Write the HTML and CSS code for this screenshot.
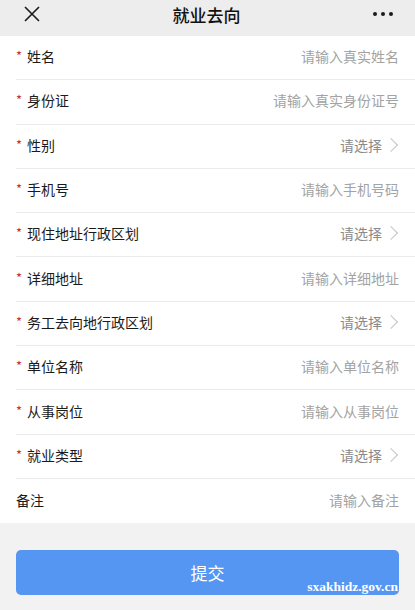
FILE: index.html
```html
<!DOCTYPE html>
<html lang="zh-CN">

<head>
    <meta charset="UTF-8">
    <meta name="viewport" content="width=device-width, initial-scale=1.0">
    <title>就业去向</title>
    <link rel="stylesheet" href="styles.css">
</head>

<body>
    <div class="topbar">
        <svg class="close" width="16" height="16" viewBox="0 0 16 16">
            <path d="M1 1 L15 15 M15 1 L1 15" stroke="#1a1a1a" stroke-width="1.6" fill="none" />
        </svg>
        <h1 class="title">就业去向</h1>
        <div class="more"><i></i><i></i><i></i></div>
    </div>

    <div class="form">
        <div class="row">
            <span class="label"><b>*</b>姓名</span>
            <span class="hint">请输入真实姓名</span>
        </div>
        <div class="row">
            <span class="label"><b>*</b>身份证</span>
            <span class="hint">请输入真实身份证号</span>
        </div>
        <div class="row">
            <span class="label"><b>*</b>性别</span>
            <span class="hint pick">请选择<em class="arrow"></em></span>
        </div>
        <div class="row">
            <span class="label"><b>*</b>手机号</span>
            <span class="hint">请输入手机号码</span>
        </div>
        <div class="row">
            <span class="label"><b>*</b>现住地址行政区划</span>
            <span class="hint pick">请选择<em class="arrow"></em></span>
        </div>
        <div class="row">
            <span class="label"><b>*</b>详细地址</span>
            <span class="hint">请输入详细地址</span>
        </div>
        <div class="row">
            <span class="label"><b>*</b>务工去向地行政区划</span>
            <span class="hint pick">请选择<em class="arrow"></em></span>
        </div>
        <div class="row">
            <span class="label"><b>*</b>单位名称</span>
            <span class="hint">请输入单位名称</span>
        </div>
        <div class="row">
            <span class="label"><b>*</b>从事岗位</span>
            <span class="hint">请输入从事岗位</span>
        </div>
        <div class="row">
            <span class="label"><b>*</b>就业类型</span>
            <span class="hint pick">请选择<em class="arrow"></em></span>
        </div>
        <div class="row">
            <span class="label">备注</span>
            <span class="hint">请输入备注</span>
        </div>
    </div>

    <div class="actions">
        <button class="submit">提交</button>
        <span class="mark">sxakhidz.gov.cn</span>
    </div>
</body>

</html>
```

FILE: styles.css
```css
body {
    margin: 0;
    background-color: #f2f2f2;
    font-family: "Noto Sans CJK SC", "Noto Sans", sans-serif;
    color: #1a1a1a;
}

/* top bar */
.topbar {
    height: 36px;
    background-color: #ededed;
    display: flex;
    align-items: center;
    justify-content: space-between;
    padding: 0 24px;
}

.close {
    display: block;
    margin-top: -8px;
}

.title {
    margin: -7px 0 0 0;
    font-size: 17px;
    font-weight: 500;
    color: #111;
}

.more {
    display: flex;
    gap: 4px;
    margin-top: -8px;
    margin-right: -2px;
}

.more i {
    width: 4px;
    height: 4px;
    border-radius: 50%;
    background-color: #1a1a1a;
}

/* form rows */
.form {
    background-color: #fff;
}

.row {
    height: 44.3px;
    box-sizing: border-box;
    border-bottom: 1px solid #ebebeb;
    margin-left: 16px;
    padding-right: 16px;
    padding-bottom: 3px;
    display: flex;
    align-items: center;
    justify-content: space-between;
    font-size: 14px;
}

.row:last-child {
    border-bottom: none;
}

.label b {
    color: #c8352b;
    font-weight: normal;
    font-size: 13px;
    margin-right: 5px;
    vertical-align: 1px;
}

.hint {
    color: #a3a3a3;
    font-size: 14px;
}

.pick {
    color: #8a8a8a;
    display: flex;
    align-items: center;
}

.arrow {
    width: 9px;
    height: 9px;
    border-top: 1.2px solid #c4c4c4;
    border-right: 1.2px solid #c4c4c4;
    transform: rotate(45deg);
    margin-left: 4px;
    margin-right: 3px;
}

/* submit */
.actions {
    position: relative;
    padding: 27px 16px 0 16px;
}

.submit {
    display: block;
    width: 100%;
    height: 45px;
    border: none;
    border-radius: 5px;
    background-color: #5596f2;
    color: #fff;
    font-family: "Noto Sans CJK SC", sans-serif;
    font-size: 17px;
}

.mark {
    position: absolute;
    right: 17px;
    bottom: 0px;
    color: #fff;
    font-family: "Liberation Serif", "DejaVu Serif", serif;
    font-weight: bold;
    font-size: 13.5px;
}
```
